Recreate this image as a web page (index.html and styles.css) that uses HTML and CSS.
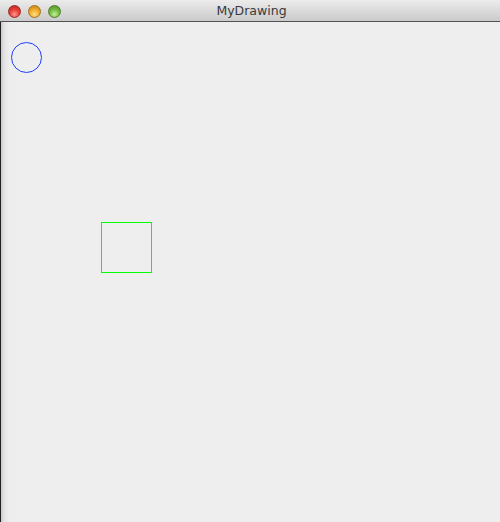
FILE: index.html
```html
<!DOCTYPE html>
<html>
<head>
<meta charset="utf-8">
<title>MyDrawing</title>
<link rel="stylesheet" href="styles.css">
</head>
<body>
<div class="window">
  <div class="titlebar">
    <div class="lights">
      <span class="light red"></span>
      <span class="light yellow"></span>
      <span class="light green"></span>
    </div>
    <div class="title">MyDrawing</div>
  </div>
  <div class="canvas">
    <svg class="drawing" width="500" height="500" viewBox="0 0 500 500">
      <circle cx="26.5" cy="35.5" r="15" fill="none" stroke="#1f3dff" stroke-width="1"/>
      <rect x="101.5" y="200.5" width="50" height="50" fill="none" stroke="#00ff00" stroke-width="1"/>
    </svg>
  </div>
</div>
</body>
</html>
```
FILE: styles.css
```css
html, body {
  margin: 0;
  padding: 0;
  background: #eeeeee;
}
.window {
  width: 500px;
  height: 522px;
  display: flex;
  flex-direction: column;
  overflow: hidden;
}
.titlebar {
  position: relative;
  height: 21px;
  flex: 0 0 21px;
  background: linear-gradient(to bottom, #ececec 0%, #dedede 40%, #cbcbcb 100%);
  border-bottom: 1px solid #515151;
  display: flex;
  align-items: center;
}
.lights {
  display: flex;
  gap: 7px;
  padding-left: 8px;
  padding-top: 1px;
}
.light {
  width: 13px;
  height: 13px;
  border-radius: 50%;
  box-sizing: border-box;
}
.red {
  background: radial-gradient(circle at 50% 75%, #ff9a90 0%, #e9423a 45%, #b61f18 100%);
  border: 1px solid #9a2a25;
}
.yellow {
  background: radial-gradient(circle at 50% 75%, #ffe08a 0%, #f2ae2c 45%, #c27b10 100%);
  border: 1px solid #a1721d;
}
.green {
  background: radial-gradient(circle at 50% 75%, #c6f09a 0%, #79bf43 45%, #4b8a22 100%);
  border: 1px solid #4e7d2c;
}
.title {
  position: absolute;
  left: 0;
  right: 0;
  top: 0;
  line-height: 21px;
  text-align: center;
  font-family: "DejaVu Sans", "Liberation Sans", sans-serif;
  font-size: 12.5px;
  color: #383a40;
  padding-left: 3px;
}
.canvas {
  position: relative;
  flex: 1;
  background: #eeeeee;
}
.canvas::before {
  content: "";
  position: absolute;
  left: 0;
  top: 0;
  bottom: 0;
  width: 9px;
  background: linear-gradient(to right, #222 0, #222 1px, #c8c8c8 1px, #e2e2e2 4px, #eeeeee 9px);
}
.drawing {
  position: relative;
  display: block;
}
```
